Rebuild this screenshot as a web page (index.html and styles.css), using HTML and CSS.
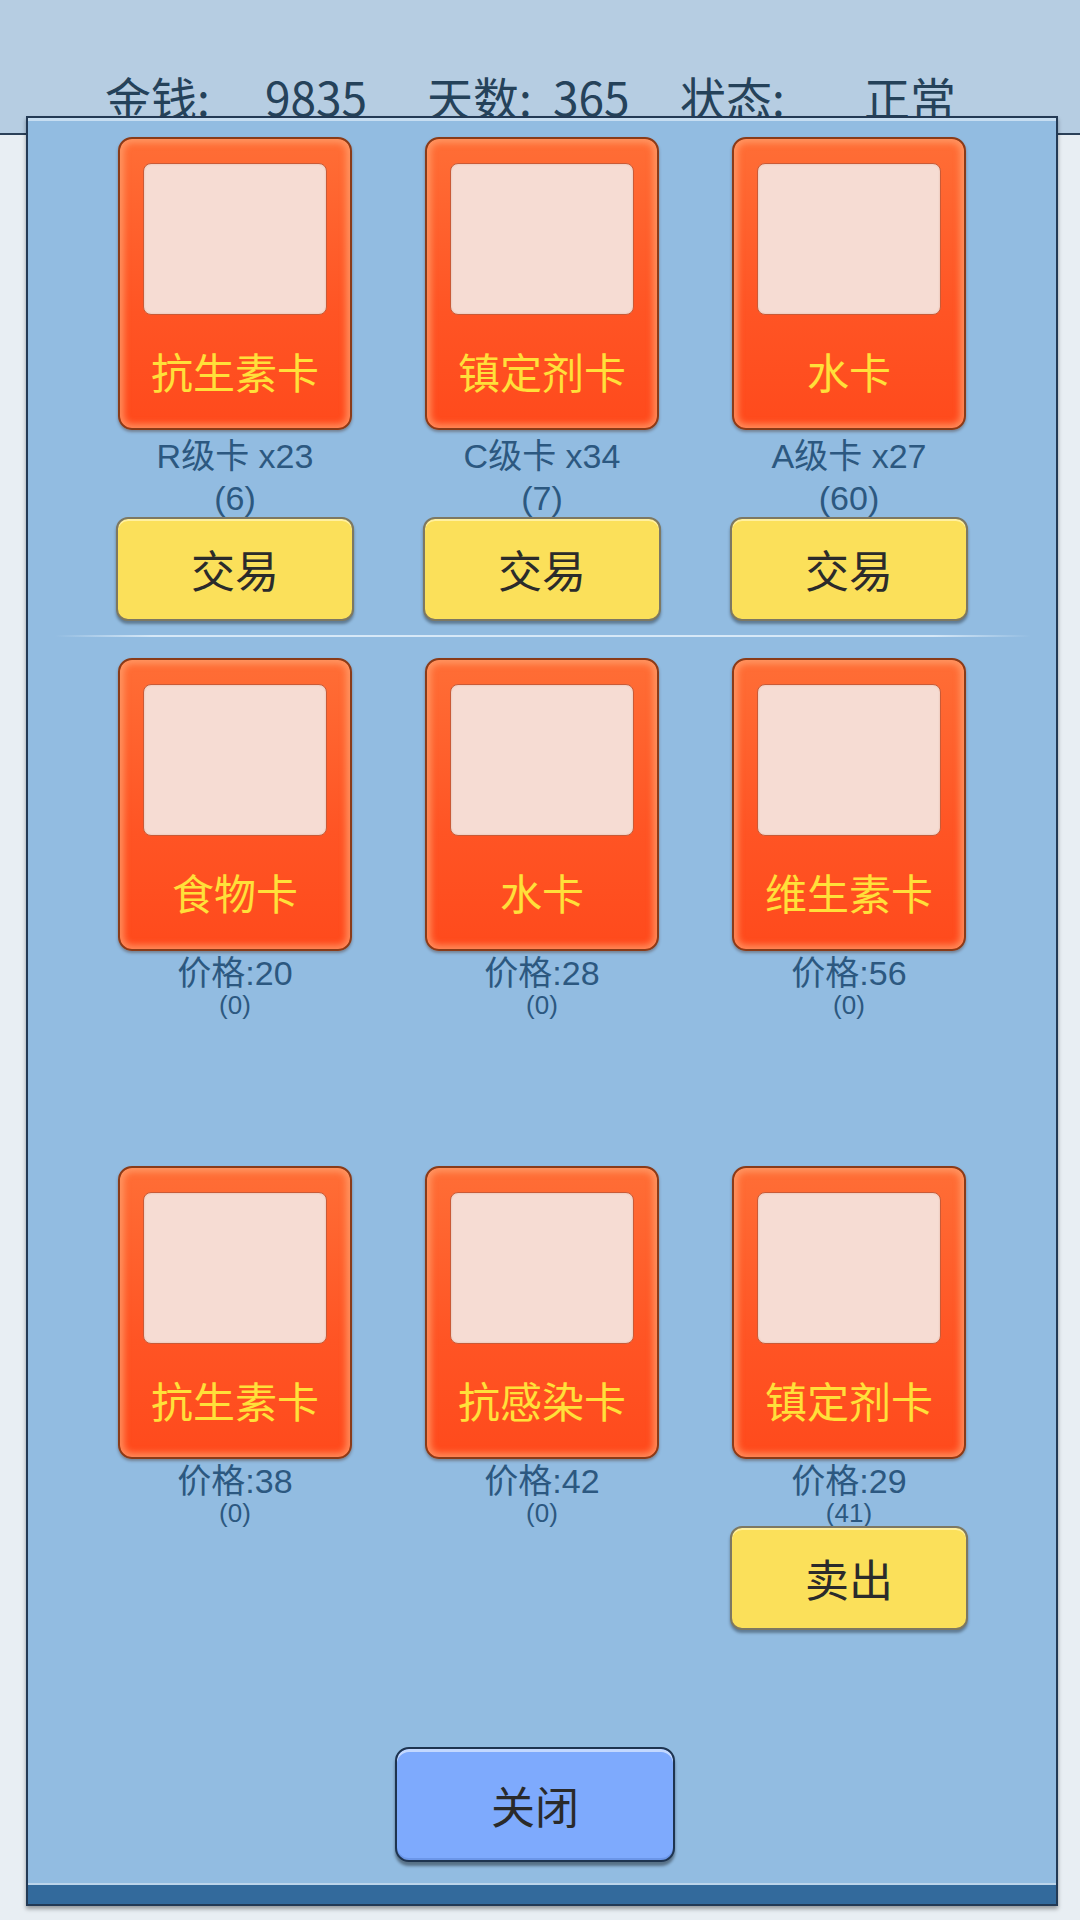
FILE: index.html
```html
<!DOCTYPE html>
<html lang="zh">
<head>
<meta charset="utf-8">
<title>交易</title>
<link rel="stylesheet" href="styles.css">
</head>
<body>
<header class="topbar">
  <span>金钱:</span><span>9835</span><span>天数:</span><span>365</span><span>状态:</span><span>正常</span>
</header>
<main class="panel">
  <section class="row-top">
    <div class="cell">
      <div class="card"><div class="pic"></div><div class="name">抗生素卡</div></div>
      <div class="info"><div>R级卡 x23</div><div>(6)</div></div>
      <button class="btn-yellow">交易</button>
    </div>
    <div class="cell">
      <div class="card"><div class="pic"></div><div class="name">镇定剂卡</div></div>
      <div class="info"><div>C级卡 x34</div><div>(7)</div></div>
      <button class="btn-yellow">交易</button>
    </div>
    <div class="cell">
      <div class="card"><div class="pic"></div><div class="name">水卡</div></div>
      <div class="info"><div>A级卡 x27</div><div>(60)</div></div>
      <button class="btn-yellow">交易</button>
    </div>
  </section>
  <div class="divider"></div>
  <section class="row-shop">
    <div class="cell">
      <div class="card"><div class="pic"></div><div class="name">食物卡</div></div>
      <div class="price"><div class="p1">价格:20</div><div class="p2">(0)</div></div>
    </div>
    <div class="cell">
      <div class="card"><div class="pic"></div><div class="name">水卡</div></div>
      <div class="price"><div class="p1">价格:28</div><div class="p2">(0)</div></div>
    </div>
    <div class="cell">
      <div class="card"><div class="pic"></div><div class="name">维生素卡</div></div>
      <div class="price"><div class="p1">价格:56</div><div class="p2">(0)</div></div>
    </div>
    <div class="cell">
      <div class="card"><div class="pic"></div><div class="name">抗生素卡</div></div>
      <div class="price"><div class="p1">价格:38</div><div class="p2">(0)</div></div>
    </div>
    <div class="cell">
      <div class="card"><div class="pic"></div><div class="name">抗感染卡</div></div>
      <div class="price"><div class="p1">价格:42</div><div class="p2">(0)</div></div>
    </div>
    <div class="cell">
      <div class="card"><div class="pic"></div><div class="name">镇定剂卡</div></div>
      <div class="price"><div class="p1">价格:29</div><div class="p2">(41)</div></div>
      <button class="btn-yellow sell">卖出</button>
    </div>
  </section>
  <button class="btn-close">关闭</button>
  <div class="band"></div>
</main>
</body>
</html>
```
FILE: styles.css
```css
* { box-sizing: border-box; }
html, body { margin: 0; padding: 0; }
body {
  width: 1080px;
  height: 1920px;
  background: #e8eef3;
  font-family: "Liberation Sans", "Noto Sans CJK SC", sans-serif;
  overflow: hidden;
}
.topbar {
  height: 135px;
  background: #b6cde2;
  border-bottom: 2px solid #2b4058;
  display: grid;
  grid-template-columns: 160px 162px 126px 127px 184px auto;
  padding: 73px 0 0 105px;
  font-family: "Noto Sans CJK SC", sans-serif;
  font-size: 46px;
  line-height: 46px;
  color: #25425a;
}
.panel {
  position: relative;
  margin: -19px 22px 0 26px;
  height: 1790px;
  border: 2px solid #233a55;
  background: #92bce1;
  box-shadow: inset 0 3px 0 #c6ddf1, 0 3px 4px rgba(0,0,0,0.35);
  display: flex;
  flex-direction: column;
}
.row-top, .row-shop {
  display: grid;
  grid-template-columns: repeat(3, 307px);
  justify-content: center;
}
.row-top { padding-top: 19px; }
.row-shop {
  margin-top: 21px;
  grid-template-rows: 508px 508px;
}
.cell {
  display: flex;
  flex-direction: column;
  align-items: center;
}
.card {
  width: 234px;
  height: 293px;
  border: 2px solid #8a3b18;
  border-radius: 14px;
  background: linear-gradient(#ff6e36, #ff5424 60%, #ff4a1c);
  box-shadow: inset 0 0 6px 4px rgba(255, 165, 115, 0.7), 0 2px 3px rgba(60, 20, 0, 0.35);
  padding: 24px 23px 0;
  display: flex;
  flex-direction: column;
}
.pic {
  height: 152px;
  background: #f6dcd3;
  border: 1.5px solid #c95a36;
  border-radius: 8px;
  box-shadow: inset 0 0 2px rgba(180, 80, 40, 0.3);
}
.name {
  flex: 1;
  display: flex;
  align-items: center;
  justify-content: center;
  font-family: "Noto Sans CJK SC", sans-serif;
  font-size: 42px;
  color: #ffe03a;
  padding-bottom: 2px;
}
.info {
  margin-top: 5px;
  font-size: 34px;
  line-height: 42px;
  color: #2c5880;
  text-align: center;
}
.btn-yellow {
  width: 238px;
  height: 104px;
  margin-top: -2px;
  border: 2px solid #7d7862;
  border-radius: 12px;
  background: #fbe05a;
  box-shadow: inset 0 2px 0 #fff0a0, 0 3px 3px rgba(0, 0, 0, 0.35);
  font-family: "Noto Sans CJK SC", sans-serif;
  font-size: 44px;
  color: #2b2b2b;
  padding: 0;
}
.divider {
  height: 2px;
  margin: 14px 25px 0 27px;
  background: linear-gradient(to right, rgba(214,232,247,0), #d6e8f7 10%, #d6e8f7 90%, rgba(214,232,247,0));
}
.price {
  margin-top: 4px;
  text-align: center;
  color: #2c5880;
}
.p1 { font-size: 34px; line-height: 36px; }
.p2 { font-size: 26px; line-height: 28px; }
.sell { margin-top: -1px; }
.btn-close {
  align-self: center;
  margin: auto 14px 21px 0;
  width: 280px;
  height: 115px;
  border: 2px solid #1e3450;
  border-radius: 14px;
  background: #7eaafd;
  box-shadow: inset 0 3px 0 #c3d8ff, inset 0 -2px 0 #6b96e8, 0 4px 3px rgba(0, 0, 0, 0.4);
  font-family: "Noto Sans CJK SC", sans-serif;
  font-size: 44px;
  color: #2a2a2a;
  padding: 0;
}
.band {
  height: 21px;
  background: #336a9c;
  border-top: 2px solid #bcd5eb;
}
```
